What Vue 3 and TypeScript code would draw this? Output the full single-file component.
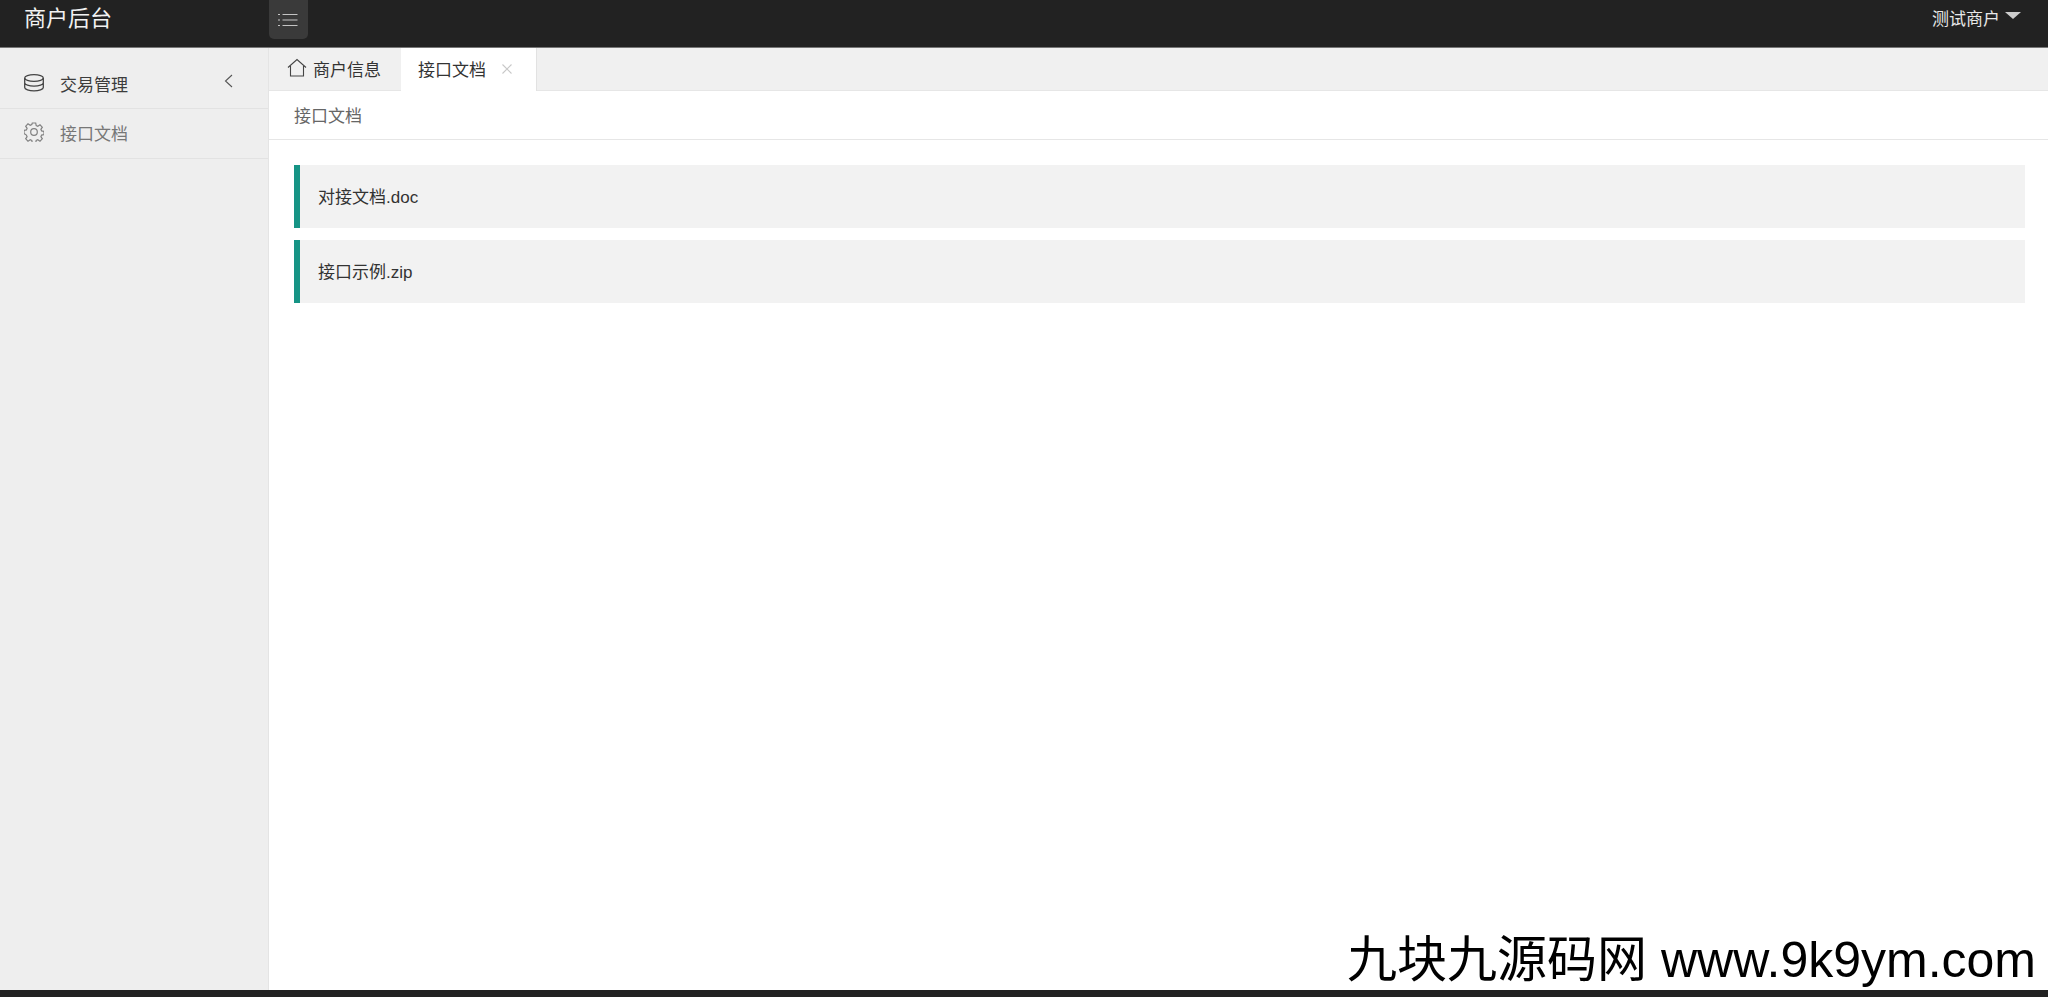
<script setup lang="ts">
const files = ['对接文档.doc', '接口示例.zip'];
</script>

<template>
  <div class="layout">
    <header class="top-bar">
      <div class="logo">商户后台</div>
      <div class="menu-btn">
        <svg width="20" height="14" viewBox="0 0 20 14" fill="none" stroke="#c4c4c4" stroke-width="1.2">
          <path d="M0 1.5h2M0 7h2M0 12.5h2M4.500 1.500h15M4.500 7h15M4.500 12.500h15" />
        </svg>
      </div>
      <div class="user">
        <span>测试商户</span>
        <i class="caret"></i>
      </div>
    </header>

    <div class="body">
      <aside class="side">
        <div class="side-item dark">
          <svg class="side-icon" width="20" height="18" viewBox="0 0 20 18" fill="none" stroke="#444" stroke-width="1.3">
            <ellipse cx="10" cy="4" rx="9.300" ry="3.300" />
            <path d="M.700 4v9.500c0 1.800 4.200 3.300 9.300 3.300s9.300-1.500 9.300-3.300V4M.700 8.800c0 1.800 4.200 3.300 9.300 3.300s9.300-1.500 9.300-3.300" />
          </svg>
          <span>交易管理</span>
          <svg class="arrow" width="9" height="14" viewBox="0 0 9 14" fill="none" stroke="#555" stroke-width="1.1">
            <path d="M8 1L1.500 7L8 13" />
          </svg>
        </div>
        <div class="side-item">
          <svg class="side-icon" width="20" height="20" viewBox="0 0 20 20" fill="none" stroke="#808080" stroke-width="1.2">
            <circle cx="10" cy="10" r="3.300" />
            <path d="M8.300 1h3.400l.5 2.500 1.600.7 2.200-1.400 2.300 2.400-1.400 2.100.7 1.600 2.400.5v3.200l-2.400.5-.7 1.600 1.400 2.100-2.300 2.400-2.200-1.400-1.600.7-.5 2.500H8.300l-.5-2.500-1.600-.7-2.200 1.400-2.300-2.400 1.400-2.100-.7-1.600L0 11.600V8.400l2.400-.5.700-1.600-1.400-2.100L4 1.800l2.200 1.400 1.600-.7z" />
          </svg>
          <span>接口文档</span>
        </div>
      </aside>

      <main class="main">
        <nav class="tabs">
          <div class="tab">
            <svg width="20" height="20" viewBox="0 0 20 20" fill="none" stroke="#444" stroke-width="1.1">
              <path d="M1 9.500L10 1.500l9 8M3.500 8v10h13V8" />
            </svg>
            <span>商户信息</span>
          </div>
          <div class="tab active">
            <span>接口文档</span>
            <svg width="10" height="10" viewBox="0 0 10 10" fill="none" stroke="#c8c8c8" stroke-width="1.1">
              <path d="M.500.500l9 9M9.500.500l-9 9" />
            </svg>
          </div>
        </nav>
        <div class="crumb">接口文档</div>
        <section class="content">
          <div v-for="file in files" :key="file" class="quote">{{ file }}</div>
        </section>
      </main>
    </div>

    <footer class="bottom-bar"></footer>
    <div class="watermark">九块九源码网 www.9k9ym.com</div>
  </div>
</template>

<style scoped>
.layout {
  position: relative;
  display: flex;
  flex-direction: column;
  height: 100vh;
  overflow: hidden;
  background: #fff;
  color: #333;
  font-family: "Liberation Sans", "Noto Sans CJK SC", sans-serif;
  font-size: 17px;
}

.top-bar {
  flex: none;
  display: flex;
  align-items: flex-start;
  height: 47px;
  background: #222;
  border-bottom: 1px solid #777;
  box-sizing: content-box;
}

.logo {
  width: 269px;
  padding-left: 24px;
  box-sizing: border-box;
  color: #f2f2f2;
  font-size: 22px;
  line-height: 38px;
}

.menu-btn {
  display: flex;
  align-items: center;
  justify-content: center;
  width: 39px;
  height: 39px;
  padding-right: 1px;
  box-sizing: border-box;
  background: #3a3a3a;
  border-radius: 0 0 5px 5px;
}

.user {
  display: flex;
  align-items: flex-start;
  gap: 5px;
  margin-left: auto;
  padding-right: 27px;
  color: #e8e8e8;
  line-height: 39px;
}

.caret {
  width: 0;
  height: 0;
  margin-top: 12px;
  border-left: 8px solid transparent;
  border-right: 8px solid transparent;
  border-top: 7px solid #ccc;
}

.body {
  flex: 1;
  display: flex;
  min-height: 0;
}

.side {
  flex: none;
  width: 269px;
  background: #eee;
  border-right: 1px solid #e4e4e4;
  box-sizing: border-box;
}

.side-item {
  position: relative;
  display: flex;
  align-items: center;
  gap: 16px;
  height: 50px;
  padding-left: 24px;
  padding-bottom: 3px;
  box-sizing: border-box;
  border-bottom: 1px solid #e2e2e2;
  color: #777;
}

.side-item.dark {
  height: 61px;
  padding-top: 10px;
  padding-bottom: 0;
  color: #3c3c3c;
}

.arrow {
  position: absolute;
  right: 35px;
  top: 26px;
}

.side-icon {
  flex: none;
}

.main {
  flex: 1;
  display: flex;
  flex-direction: column;
  min-width: 0;
}

.tabs {
  flex: none;
  display: flex;
  height: 42px;
  background: #f0f0f0;
  border-bottom: 1px solid #e6e6e6;
  box-sizing: content-box;
}

.tab {
  display: flex;
  align-items: center;
  gap: 6px;
  height: 42px;
  padding: 0 20px 2px 18px;
  box-sizing: border-box;
  color: #333;
}

.tab.active {
  gap: 16px;
  height: 43px;
  padding: 0 24px 2px 17px;
  background: #fff;
  border-right: 1px solid #e2e2e2;
}

.crumb {
  flex: none;
  height: 48px;
  padding-left: 25px;
  border-bottom: 1px solid #e6e6e6;
  color: #666;
  line-height: 51px;
}

.content {
  display: flex;
  flex-direction: column;
  gap: 12px;
  padding: 25px 23px 0 25px;
}

.quote {
  height: 63px;
  padding-left: 18px;
  background: #f2f2f2;
  border-left: 6px solid #169485;
  color: #333;
  line-height: 65px;
}

.bottom-bar {
  flex: none;
  height: 7px;
  background: #222;
}

.watermark {
  position: absolute;
  right: 12px;
  bottom: 7px;
  color: #000;
  font-size: 50px;
  line-height: 60px;
  white-space: nowrap;
}
</style>

<style>
html,
body {
  margin: 0;
}
</style>
